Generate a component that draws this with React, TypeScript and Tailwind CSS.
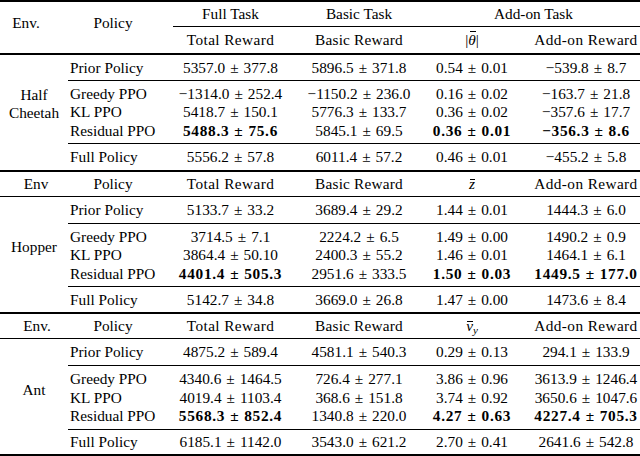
import React from "react";

const FONT = { fontFamily: '"Liberation Serif", "Times New Roman", serif' };

function Num({ v }: { v: string }) {
  const bold = v.startsWith("*");
  const s = bold ? v.slice(1) : v;
  const [a, c] = s.split(" ± ");
  return (
    <span className={bold ? "font-bold tracking-[0.7px] whitespace-nowrap" : "whitespace-nowrap"}>
      {a}
      <span className="mx-[5px]">±</span>
      {c}
    </span>
  );
}

type Row = [string, string, string, string, string];

function DataRow({ r, h }: { r: Row; h: string }) {
  return (
    <div className={`flex items-center whitespace-nowrap leading-none ${h}`}>
      <div className="w-[102px] pl-[2px]">{r[0]}</div>
      <div className="w-[121px] text-center">
        <Num v={r[1]} />
      </div>
      <div className="w-[136px] text-center">
        <Num v={r[2]} />
      </div>
      <div className="w-[90px] text-center">
        <Num v={r[3]} />
      </div>
      <div className="w-[123px] pl-[15px] text-center">
        <Num v={r[4]} />
      </div>
    </div>
  );
}

function Rule({ cls }: { cls: string }) {
  return <div className={`bg-black ${cls}`} />;
}

function Body({
  env,
  envCls,
  rows,
  priorH,
  groupCls,
  fullH,
}: {
  env: React.ReactNode;
  envCls: string;
  rows: Row[];
  priorH: string;
  groupCls: string;
  fullH: string;
}) {
  return (
    <div className="flex">
      <div className={`w-[68px] flex items-center justify-center text-center leading-[18px] ${envCls}`}>{env}</div>
      <div className="w-[572px] flex flex-col">
        <DataRow r={rows[0]} h={priorH} />
        <Rule cls="h-px" />
        <div className={`flex flex-col ${groupCls}`}>
          <DataRow r={rows[1]} h="h-[18.5px]" />
          <DataRow r={rows[2]} h="h-[18.5px]" />
          <DataRow r={rows[3]} h="h-[18.5px]" />
        </div>
        <Rule cls="h-px" />
        <DataRow r={rows[4]} h={fullH} />
      </div>
    </div>
  );
}

function SubHeader({ envLabel, envCls, sym }: { envLabel: string; envCls: string; sym: React.ReactNode }) {
  return (
    <div className="flex items-center h-[24px] pb-[1px] whitespace-nowrap leading-none">
      <div className={`w-[68px] text-center ${envCls}`}>{envLabel}</div>
      <div className="w-[102px] pl-[2px] pr-[14px] text-center">Policy</div>
      <div className="w-[121px] text-center tracking-[0.4px]">Total Reward</div>
      <div className="w-[136px] text-center tracking-[0.2px]">Basic Reward</div>
      <div className="w-[90px] text-center">{sym}</div>
      <div className="w-[123px] pl-[15px] text-center tracking-[0.4px]">Add-on Reward</div>
    </div>
  );
}

function Bar({ children, cls }: { children: React.ReactNode; cls: string }) {
  return (
    <span className="relative inline-block italic">
      {children}
      <span className={`absolute h-px bg-black ${cls}`} />
    </span>
  );
}

const cheetah: Row[] = [
  ["Prior Policy", "5357.0 ± 377.8", "5896.5 ± 371.8", "0.54 ± 0.01", "−539.8 ± 8.7"],
  ["Greedy PPO", "−1314.0 ± 252.4", "−1150.2 ± 236.0", "0.16 ± 0.02", "−163.7 ± 21.8"],
  ["KL PPO", "5418.7 ± 150.1", "5776.3 ± 133.7", "0.36 ± 0.02", "−357.6 ± 17.7"],
  ["Residual PPO", "*5488.3 ± 75.6", "5845.1 ± 69.5", "*0.36 ± 0.01", "*−356.3 ± 8.6"],
  ["Full Policy", "5556.2 ± 57.8", "6011.4 ± 57.2", "0.46 ± 0.01", "−455.2 ± 5.8"],
];

const hopper: Row[] = [
  ["Prior Policy", "5133.7 ± 33.2", "3689.4 ± 29.2", "1.44 ± 0.01", "1444.3 ± 6.0"],
  ["Greedy PPO", "3714.5 ± 7.1", "2224.2 ± 6.5", "1.49 ± 0.00", "1490.2 ± 0.9"],
  ["KL PPO", "3864.4 ± 50.10", "2400.3 ± 55.2", "1.46 ± 0.01", "1464.1 ± 6.1"],
  ["Residual PPO", "*4401.4 ± 505.3", "2951.6 ± 333.5", "*1.50 ± 0.03", "*1449.5 ± 177.0"],
  ["Full Policy", "5142.7 ± 34.8", "3669.0 ± 26.8", "1.47 ± 0.00", "1473.6 ± 8.4"],
];

const ant: Row[] = [
  ["Prior Policy", "4875.2 ± 589.4", "4581.1 ± 540.3", "0.29 ± 0.13", "294.1 ± 133.9"],
  ["Greedy PPO", "4340.6 ± 1464.5", "726.4 ± 277.1", "3.86 ± 0.96", "3613.9 ± 1246.4"],
  ["KL PPO", "4019.4 ± 1103.4", "368.6 ± 151.8", "3.74 ± 0.92", "3650.6 ± 1047.6"],
  ["Residual PPO", "*5568.3 ± 852.4", "1340.8 ± 220.0", "*4.27 ± 0.63", "*4227.4 ± 705.3"],
  ["Full Policy", "6185.1 ± 1142.0", "3543.0 ± 621.2", "2.70 ± 0.41", "2641.6 ± 542.8"],
];

export default function App() {
  return (
    <div
      className="w-[640px] h-[456px] bg-white text-black text-[15.3px] overflow-hidden font-['Liberation_Serif','Times_New_Roman',serif]"
      style={FONT}
    >
      <div className="flex flex-col">
        <Rule cls="h-[2px]" />
        {/* Half Cheetah header */}
        <div className="flex h-[51px] whitespace-nowrap leading-none">
          <div className="w-[68px] pr-[16px] pb-[9px] flex items-center justify-center">Env.</div>
          <div className="w-[102px] pl-[2px] pr-[14px] pb-[9px] flex items-center justify-center">Policy</div>
          <div className="w-[470px] flex flex-col">
            <div className="h-[24px] flex items-center">
              <div className="w-[121px] text-center">Full Task</div>
              <div className="w-[136px] text-center">Basic Task</div>
              <div className="w-[213px] text-center">Add-on Task</div>
            </div>
            <Rule cls="h-px ml-[3px]" />
            <div className="h-[26px] flex items-center">
              <div className="w-[121px] text-center tracking-[0.4px]">Total Reward</div>
              <div className="w-[136px] text-center tracking-[0.2px]">Basic Reward</div>
              <div className="w-[90px] text-center">
                |
                <Bar cls="left-[2px] right-[0px] top-[-1px]">θ</Bar>|
              </div>
              <div className="w-[123px] pl-[15px] text-center tracking-[0.4px]">Add-on Reward</div>
            </div>
          </div>
        </div>
        <Rule cls="h-[2px]" />
        <Body
          env={
            <span>
              Half
              <br />
              Cheetah
            </span>
          }
          envCls="pb-[17px]"
          rows={cheetah}
          priorH="h-[25px]"
          groupCls="pt-[3px] pb-[3.5px]"
          fullH="h-[26px]"
        />
        <Rule cls="h-[2px]" />
        <SubHeader
          envLabel="Env"
          envCls="pl-[4px]"
          sym={<Bar cls="left-[1px] right-[0px] top-[3px]">z</Bar>}
        />
        <Rule cls="h-px" />
        <Body
          env="Hopper"
          envCls="pb-[15px]"
          rows={hopper}
          priorH="h-[26px]"
          groupCls="pt-[3px] pb-[3.5px]"
          fullH="h-[25px]"
        />
        <Rule cls="h-[2px]" />
        <SubHeader
          envLabel="Env."
          envCls="pl-[6px]"
          sym={
            <span>
              <Bar cls="left-[1px] right-[0px] top-[3px]">v</Bar>
              <span className="italic text-[11px] relative top-[3px]">y</span>
            </span>
          }
        />
        <Rule cls="h-px" />
        <Body
          env="Ant"
          envCls="pb-[14px]"
          rows={ant}
          priorH="h-[26px]"
          groupCls="pt-[3.5px] pb-[4px]"
          fullH="h-[24px]"
        />
        <Rule cls="h-[2px]" />
      </div>
    </div>
  );
}
